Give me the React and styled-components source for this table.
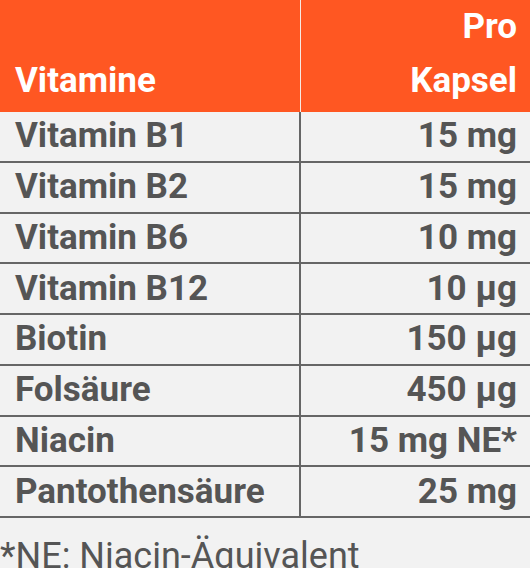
import React from 'react';
import styled, { createGlobalStyle } from 'styled-components';

const GlobalStyle = createGlobalStyle`
  html, body {
    margin: 0;
    padding: 0;
    background: #f2f2f2;
  }
  body {
    font-family: Roboto, "Liberation Sans", sans-serif;
    color: #555;
  }
`;

const Page = styled.div`
  width: 530px;
  height: 568px;
  overflow: hidden;
  background: #f2f2f2;
`;

const Table = styled.table`
  width: 530px;
  border-collapse: collapse;
  table-layout: fixed;
`;

const HeadCell = styled.th`
  background: #ff5722;
  color: #fff;
  font-size: 35px;
  font-weight: 700;
  line-height: 54px;
  height: 110px;
  box-sizing: border-box;
  vertical-align: bottom;
  padding: 0 ${p => (p.$right ? '13px' : '15px')} 4px 15px;
  text-align: ${p => (p.$right ? 'right' : 'left')};
  width: ${p => (p.$right ? '230px' : '300px')};
  border-left: ${p => (p.$right ? '1.5px solid #f6e9e3' : 'none')};
`;

const Cell = styled.td`
  font-size: 35px;
  font-weight: 700;
  color: #555;
  height: 48.75px;
  line-height: 40px;
  padding: 0 ${p => (p.$right ? '13px' : '15px')} 0 15px;
  text-align: ${p => (p.$right ? 'right' : 'left')};
  vertical-align: middle;
  border-bottom: 2px solid #666;
  border-left: ${p => (p.$right ? '2px solid #666' : 'none')};
  white-space: nowrap;
`;

const Note = styled.p`
  margin: 18px 0 0;
  font-size: 36px;
  font-weight: 400;
  color: #555;
  line-height: 40px;
`;

const rows = [
  ['Vitamin B1', '15 mg'],
  ['Vitamin B2', '15 mg'],
  ['Vitamin B6', '10 mg'],
  ['Vitamin B12', '10 µg'],
  ['Biotin', '150 µg'],
  ['Folsäure', '450 µg'],
  ['Niacin', '15 mg NE*'],
  ['Pantothensäure', '25 mg'],
];

const App = () => (
  <Page>
    <GlobalStyle />
    <Table>
      <thead>
        <tr>
          <HeadCell>Vitamine</HeadCell>
          <HeadCell $right>Pro<br />Kapsel</HeadCell>
        </tr>
      </thead>
      <tbody>
        {rows.map(([name, amount]) => (
          <tr key={name}>
            <Cell>{name}</Cell>
            <Cell $right>{amount}</Cell>
          </tr>
        ))}
      </tbody>
    </Table>
    <Note>*NE: Niacin-Äquivalent</Note>
  </Page>
);

export default App;
